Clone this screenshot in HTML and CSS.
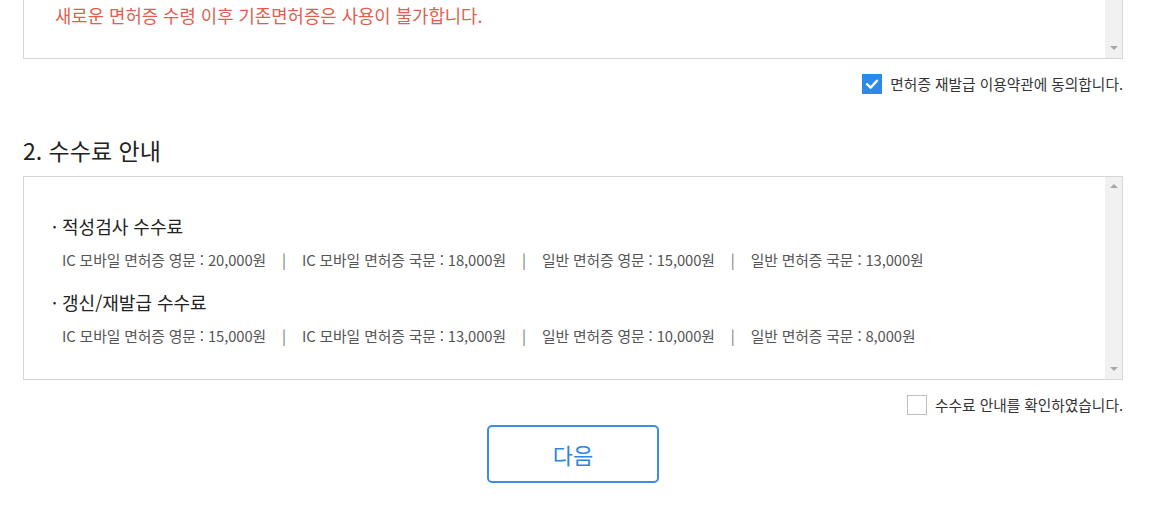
FILE: index.html
```html
<!DOCTYPE html>
<html lang="ko">
<head>
<meta charset="utf-8">
<link rel="stylesheet" href="styles.css">
</head>
<body>
<div class="page">
  <div class="box box-terms">
    <div class="box-content terms-content">
      <p class="warn">새로운 면허증 수령 이후 기존면허증은 사용이 불가합니다.</p>
    </div>
    <div class="scrollbar">
      <span class="arrow up"></span>
      <span class="arrow down"></span>
    </div>
  </div>
  <label class="agree">
    <span class="check checked">
      <svg viewBox="0 0 20 20" width="20" height="20"><path d="M5 10.2 L8.6 13.6 L15 6.8" fill="none" stroke="#fff" stroke-width="2.4" stroke-linecap="round" stroke-linejoin="round"/></svg>
    </span>
    <span class="agree-text">면허증 재발급 이용약관에 동의합니다.</span>
  </label>

  <h2 class="section-title">2. 수수료 안내</h2>
  <div class="box box-fee">
    <div class="box-content fee-content">
      <p class="fee-title">· 적성검사 수수료</p>
      <p class="fee-line"><span>IC 모바일 면허증 영문 : 20,000원</span><span class="sep">|</span><span>IC 모바일 면허증 국문 : 18,000원</span><span class="sep">|</span><span>일반 면허증 영문 : 15,000원</span><span class="sep">|</span><span>일반 면허증 국문 : 13,000원</span></p>
      <p class="fee-title second">· 갱신/재발급 수수료</p>
      <p class="fee-line"><span>IC 모바일 면허증 영문 : 15,000원</span><span class="sep">|</span><span>IC 모바일 면허증 국문 : 13,000원</span><span class="sep">|</span><span>일반 면허증 영문 : 10,000원</span><span class="sep">|</span><span>일반 면허증 국문 : 8,000원</span></p>
    </div>
    <div class="scrollbar">
      <span class="arrow up"></span>
      <span class="arrow down"></span>
    </div>
  </div>
  <label class="agree agree-fee">
    <span class="check"></span>
    <span class="agree-text">수수료 안내를 확인하였습니다.</span>
  </label>

  <div class="actions">
    <button class="btn-next" type="button">다음</button>
  </div>
</div>
</body>
</html>
```

FILE: styles.css
```css
* { box-sizing: border-box; }
html, body {
  margin: 0;
  padding: 0;
  background: #fff;
  overflow: hidden;
}
body {
  font-family: "Noto Sans CJK KR", "Noto Sans", sans-serif;
  color: #333;
}
p { margin: 0; }

.page {
  width: 1100px;
  margin-left: 23px;
}

.box {
  display: flex;
  border: 1px solid #d6d6d6;
  background: #fff;
}
.box-content { flex: 1; }

.box-terms {
  margin-top: -60px;
  height: 119px;
}
.terms-content {
  padding: 62px 0 0 31px;
}
.warn {
  font-size: 17.8px;
  line-height: 24px;
  color: #e0604f;
}

.scrollbar {
  width: 17px;
  background: #f1f1f1;
  display: flex;
  flex-direction: column;
  justify-content: space-between;
  align-items: center;
  padding: 7px 0 8px;
}
.arrow {
  width: 0;
  height: 0;
  border-left: 4px solid transparent;
  border-right: 4px solid transparent;
}
.arrow.up { border-bottom: 4px solid #a8a8a8; }
.arrow.down { border-top: 4px solid #a8a8a8; }

.agree {
  display: flex;
  justify-content: flex-end;
  align-items: center;
  gap: 8px;
  margin-top: 15px;
  height: 20px;
}
.check {
  width: 20px;
  height: 20px;
  border: 1px solid #bdbdbd;
  background: #fff;
  display: flex;
}
.check.checked {
  border: none;
  background: #2b89ea;
}
.agree-text {
  font-size: 14.7px;
  line-height: 20px;
  color: #333;
}

.section-title {
  margin: 41px 0 0;
  font-size: 23px;
  line-height: 30px;
  font-weight: 400;
  color: #222;
}

.box-fee {
  margin-top: 11px;
  height: 204px;
}
.fee-content {
  padding: 37px 0 0 28px;
}
.fee-title {
  font-size: 18px;
  line-height: 24px;
  color: #222;
}
.fee-title.second { margin-top: 18px; }
.fee-line {
  margin-top: 10px;
  padding-left: 10px;
  font-size: 14.8px;
  line-height: 24px;
  color: #555;
  letter-spacing: -0.1px;
}
.sep {
  margin: 0 16px;
  color: #777;
}

.agree-fee { margin-top: 15px; }

.actions {
  display: flex;
  justify-content: center;
  margin-top: 10px;
}
.btn-next {
  width: 172px;
  height: 58px;
  border: 2px solid #3a8ee8;
  border-radius: 5px;
  background: #fff;
  color: #2e86de;
  font-family: "Noto Sans CJK KR", "Noto Sans", sans-serif;
  font-size: 22px;
  cursor: pointer;
}
```
